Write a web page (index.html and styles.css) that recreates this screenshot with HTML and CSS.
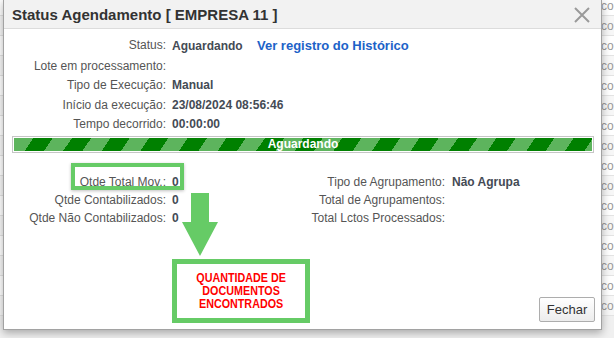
FILE: index.html
```html
<!DOCTYPE html>
<html lang="pt-BR">
<head>
  <meta charset="UTF-8">
  <title>Status Agendamento</title>
  <link rel="stylesheet" href="styles.css">
</head>
<body>
  <div class="grid-bg">
    <div class="bg-row"><span>co</span></div>
    <div class="bg-row alt"><span>co</span></div>
    <div class="bg-row"><span>co</span></div>
    <div class="bg-row alt"><span>co</span></div>
    <div class="bg-row"><span>co</span></div>
    <div class="bg-row alt"><span>co</span></div>
    <div class="bg-row"><span>co</span></div>
    <div class="bg-row alt"><span>co</span></div>
    <div class="bg-row"><span>co</span></div>
    <div class="bg-row alt"><span>co</span></div>
    <div class="bg-row"><span>co</span></div>
    <div class="bg-row alt"><span>co</span></div>
    <div class="bg-row"><span>co</span></div>
    <div class="bg-row alt"><span>co</span></div>
    <div class="bg-row"><span>co</span></div>
    <div class="bg-row alt"><span>co</span></div>
    <div class="bg-row empty"></div>
  </div>

  <div class="dialog">
    <div class="dialog-header">
      <span class="dialog-title">Status Agendamento [ EMPRESA 11 ]</span>
      <svg class="close" width="16" height="16" viewBox="0 0 16 16">
        <path d="M1 1 L15 15 M15 1 L1 15" stroke="#9a9a9a" stroke-width="2" fill="none"/>
      </svg>
    </div>

    <div class="dialog-body">
      <div class="info">
        <span class="lbl">Status:</span>
        <span class="val">Aguardando <a class="link" href="#">Ver registro do Histórico</a></span>
        <span class="lbl">Lote em processamento:</span>
        <span class="val"></span>
        <span class="lbl">Tipo de Execução:</span>
        <span class="val">Manual</span>
        <span class="lbl">Início da execução:</span>
        <span class="val">23/08/2024 08:56:46</span>
        <span class="lbl">Tempo decorrido:</span>
        <span class="val">00:00:00</span>
      </div>

      <div class="progress">
        <div class="progress-bar">Aguardando</div>
      </div>

      <div class="totals">
        <div class="info left">
          <span class="lbl">Qtde Total Mov.:</span>
          <span class="val">0</span>
          <span class="lbl">Qtde Contabilizados:</span>
          <span class="val">0</span>
          <span class="lbl">Qtde Não Contabilizados:</span>
          <span class="val">0</span>
        </div>
        <div class="info right">
          <span class="lbl">Tipo de Agrupamento:</span>
          <span class="val">Não Agrupa</span>
          <span class="lbl">Total de Agrupamentos:</span>
          <span class="val"></span>
          <span class="lbl">Total Lctos Processados:</span>
          <span class="val"></span>
        </div>
      </div>
    </div>

    <div class="dialog-footer">
      <button class="btn">Fechar</button>
    </div>

    <!-- anotações -->
    <div class="mark"></div>
    <svg class="arrow" width="37" height="63" viewBox="0 0 37 63">
      <path d="M9 0 H27 V29 H36 L18 63 L0 29 H9 Z" fill="#66cb66"/>
    </svg>
    <div class="note"><span>QUANTIDADE DE<br>DOCUMENTOS<br>ENCONTRADOS</span></div>
  </div>
</body>
</html>
```

FILE: styles.css
```css
body {
  margin: 0;
  background: #f0f0f0;
  font-family: "Liberation Sans", Arial, sans-serif;
  overflow: hidden;
}
.grid-bg {
  margin-top: -4px;
}
.bg-row {
  height: 19px;
  border-bottom: 1px solid #e3e3e3;
  background: #fff;
  display: flex;
  align-items: center;
  padding-left: 601px;
  font-size: 12px;
  color: #9a9a9a;
  white-space: nowrap;
}
.bg-row.alt {
  background: #f7f7f7;
}
.bg-row.empty {
  height: 30px;
  background: #f0f0f0;
  border-bottom: none;
}

.dialog {
  position: absolute;
  left: 3px;
  top: -1px;
  width: 597px;
  height: 329px;
  border: 1px solid #a2a2a2;
  background: #fff;
  box-shadow: 0 3px 8px rgba(0,0,0,0.3);
  display: flex;
  flex-direction: column;
}
.dialog-header {
  height: 28px;
  background: #f2f2f2;
  border-bottom: 1px solid #dcdcdc;
  display: flex;
  align-items: center;
  justify-content: space-between;
  padding: 0 11px 0 8px;
}
.dialog-title {
  font-size: 15px;
  font-weight: bold;
  color: #333;
}
.close {
  margin-top: 1px;
}
.dialog-body {
  padding-top: 7px;
}
.info {
  display: grid;
  grid-template-columns: 162px auto;
  column-gap: 6px;
  font-size: 12px;
  line-height: 19.5px;
}
.lbl {
  text-align: right;
  color: #555;
}
.val {
  font-weight: bold;
  color: #444b55;
}
.link {
  margin-left: 11px;
  font-size: 13px;
  color: #1c62c8;
  text-decoration: none;
}
.progress {
  margin: 1px 7px 0 8px;
  border: 1px solid #c6c6c6;
  padding: 1px;
}
.progress-bar {
  height: 13px;
  line-height: 13px;
  font-size: 12px;
  font-weight: bold;
  color: #fff;
  text-align: center;
  background: repeating-linear-gradient(124deg, #5db45d 0 16px, #008000 16px 32px);
}
.totals {
  display: flex;
  margin-top: 20px;
}
.totals .info {
  line-height: 18px;
}
.info.left {
  width: 296px;
}
.info.right {
  grid-template-columns: 145px auto;
  column-gap: 7px;
}
.dialog-footer {
  margin-top: auto;
  display: flex;
  justify-content: flex-end;
  padding: 0 6px 7px 0;
}
.btn {
  width: 56px;
  height: 25px;
  font-family: "Liberation Sans", Arial, sans-serif;
  font-size: 13px;
  color: #333;
  border: 1px solid #adadad;
  border-radius: 2px;
  background: linear-gradient(#ffffff, #ececec);
  padding: 0;
}

.mark {
  position: absolute;
  left: 67px;
  top: 163px;
  width: 105px;
  height: 19px;
  border: 4px solid #66cb66;
  box-shadow: 0 1px 3px rgba(0,0,0,0.25);
}
.arrow {
  position: absolute;
  left: 178px;
  top: 193px;
}
.note {
  position: absolute;
  left: 168px;
  top: 259px;
  width: 128px;
  height: 54px;
  border: 5px solid #66cb66;
  display: flex;
  align-items: center;
  justify-content: center;
  text-align: center;
}
.note span {
  display: inline-block;
  transform: scaleX(0.86);
  font-size: 12.5px;
  line-height: 13px;
  font-weight: bold;
  color: #ff0000;
}
```
